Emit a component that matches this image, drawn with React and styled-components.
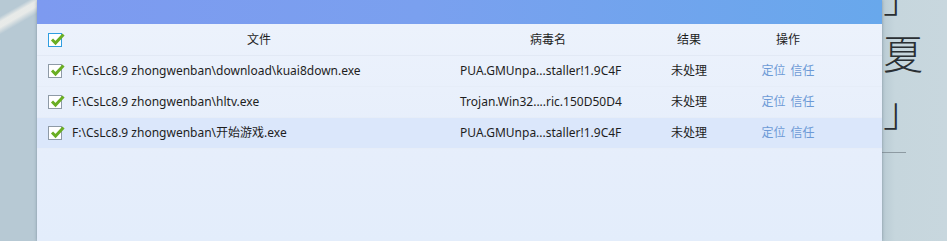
import React from "react";
import styled, { createGlobalStyle } from "styled-components";

const GlobalStyle = createGlobalStyle`
  html, body {
    margin: 0;
    padding: 0;
    overflow: hidden;
  }
  body {
    font-family: "Noto Sans", "Noto Sans CJK SC", sans-serif;
    font-size: 12px;
    color: #1e1e1e;
  }
`;

const Page = styled.div`
  width: 947px;
  height: 241px;
  display: flex;
  overflow: hidden;
  background: #c4d4dc;
`;

const LeftStrip = styled.div`
  flex: 0 0 37px;
  background:
    linear-gradient(150deg, transparent 18%, rgba(240, 240, 236, 0.85) 24%, rgba(240, 240, 236, 0.85) 30%, transparent 38%) top / 100% 70px no-repeat,
    #b7c9d4;
`;

const Window = styled.div`
  flex: 0 0 845px;
  display: flex;
  flex-direction: column;
  box-shadow: 0 0 3px rgba(60, 80, 100, 0.45);
  position: relative;
  z-index: 1;
`;

const TitleBar = styled.div`
  height: 24px;
  background: linear-gradient(90deg, #7d9af0 0%, #7aa0ef 45%, #68a8ec 100%);
`;

const Body = styled.div`
  flex: 1;
  padding-top: 1px;
  background: linear-gradient(180deg, #ecf2fc 0%, #e6eefb 60%, #e3edfb 100%);
`;

const Row = styled.div`
  display: grid;
  grid-template-columns: 35px 374px 204px 78px 120px 1fr;
  align-items: center;
  height: 31px;
  border-bottom: 1px solid ${({ $header }) => ($header ? "#e2e9f5" : "#e6edf8")};
  box-sizing: border-box;
  background: ${({ $active }) => ($active ? "#dbe7fb" : "transparent")};
`;

const Cell = styled.div`
  display: flex;
  align-items: center;
  justify-content: ${({ $center }) => ($center ? "center" : "flex-start")};
  padding-left: ${({ $pad }) => $pad || 0}px;
  white-space: nowrap;
  line-height: 18px;
`;

const Check = styled.span`
  display: inline-flex;
  width: 14px;
  height: 14px;
  box-sizing: border-box;
  border: 1px solid ${({ $blue }) => ($blue ? "#2f9de0" : "#8e9aa6")};
  background: #fff;
  position: relative;
  margin-left: 11px;

  svg {
    position: absolute;
    left: 1px;
    top: -2px;
  }
`;

const Link = styled.span`
  color: #6d9ad6;
  margin-right: 5px;
  &:last-child {
    margin-right: 0;
  }
`;

const RightStrip = styled.div`
  flex: 1;
  display: flex;
  flex-direction: column;
  background: linear-gradient(90deg, #b9cbd3 0%, #c6d6dd 20%, #c8d7de 100%);
`;

const Vertical = styled.div`
  margin-top: -33px;
  padding-left: 1px;
  display: flex;
  flex-direction: column;
  font-family: "Noto Sans CJK SC", sans-serif;
  font-size: 40px;
  line-height: 57px;
  color: #2a2f33;
  font-weight: 300;
`;

const Rule = styled.div`
  margin-top: 14px;
  width: 24px;
  height: 1px;
  background: #8d9aa2;
`;

const Tick = ({ blue }) => (
  <Check $blue={blue}>
    <svg width="15" height="14" viewBox="0 0 15 14">
      <path d="M2 7.5 L5.5 11 L13.5 2.5" fill="none" stroke="#6aae23" strokeWidth="3" strokeLinejoin="miter" />
    </svg>
  </Check>
);

const rows = [
  ["F:\\CsLc8.9 zhongwenban\\download\\kuai8down.exe", "PUA.GMUnpa...staller!1.9C4F"],
  ["F:\\CsLc8.9 zhongwenban\\hltv.exe", "Trojan.Win32....ric.150D50D4"],
  ["F:\\CsLc8.9 zhongwenban\\开始游戏.exe", "PUA.GMUnpa...staller!1.9C4F"],
];

export default function App() {
  return (
    <>
      <GlobalStyle />
      <Page>
        <LeftStrip />
        <Window>
          <TitleBar />
          <Body>
            <Row $header>
              <Cell>
                <Tick blue />
              </Cell>
              <Cell $center>文件</Cell>
              <Cell $center>病毒名</Cell>
              <Cell $center>结果</Cell>
              <Cell $center>操作</Cell>
              <Cell />
            </Row>
            {rows.map(([file, virus], i) => (
              <Row key={i} $active={i === 2}>
                <Cell>
                  <Tick />
                </Cell>
                <Cell>{file}</Cell>
                <Cell $pad={14}>{virus}</Cell>
                <Cell $center>未处理</Cell>
                <Cell $center>
                  <Link>定位</Link>
                  <Link>信任</Link>
                </Cell>
                <Cell />
              </Row>
            ))}
          </Body>
        </Window>
        <RightStrip>
          <Vertical>
            <span>」</span>
            <span>夏</span>
            <span>」</span>
          </Vertical>
          <Rule />
        </RightStrip>
      </Page>
    </>
  );
}
